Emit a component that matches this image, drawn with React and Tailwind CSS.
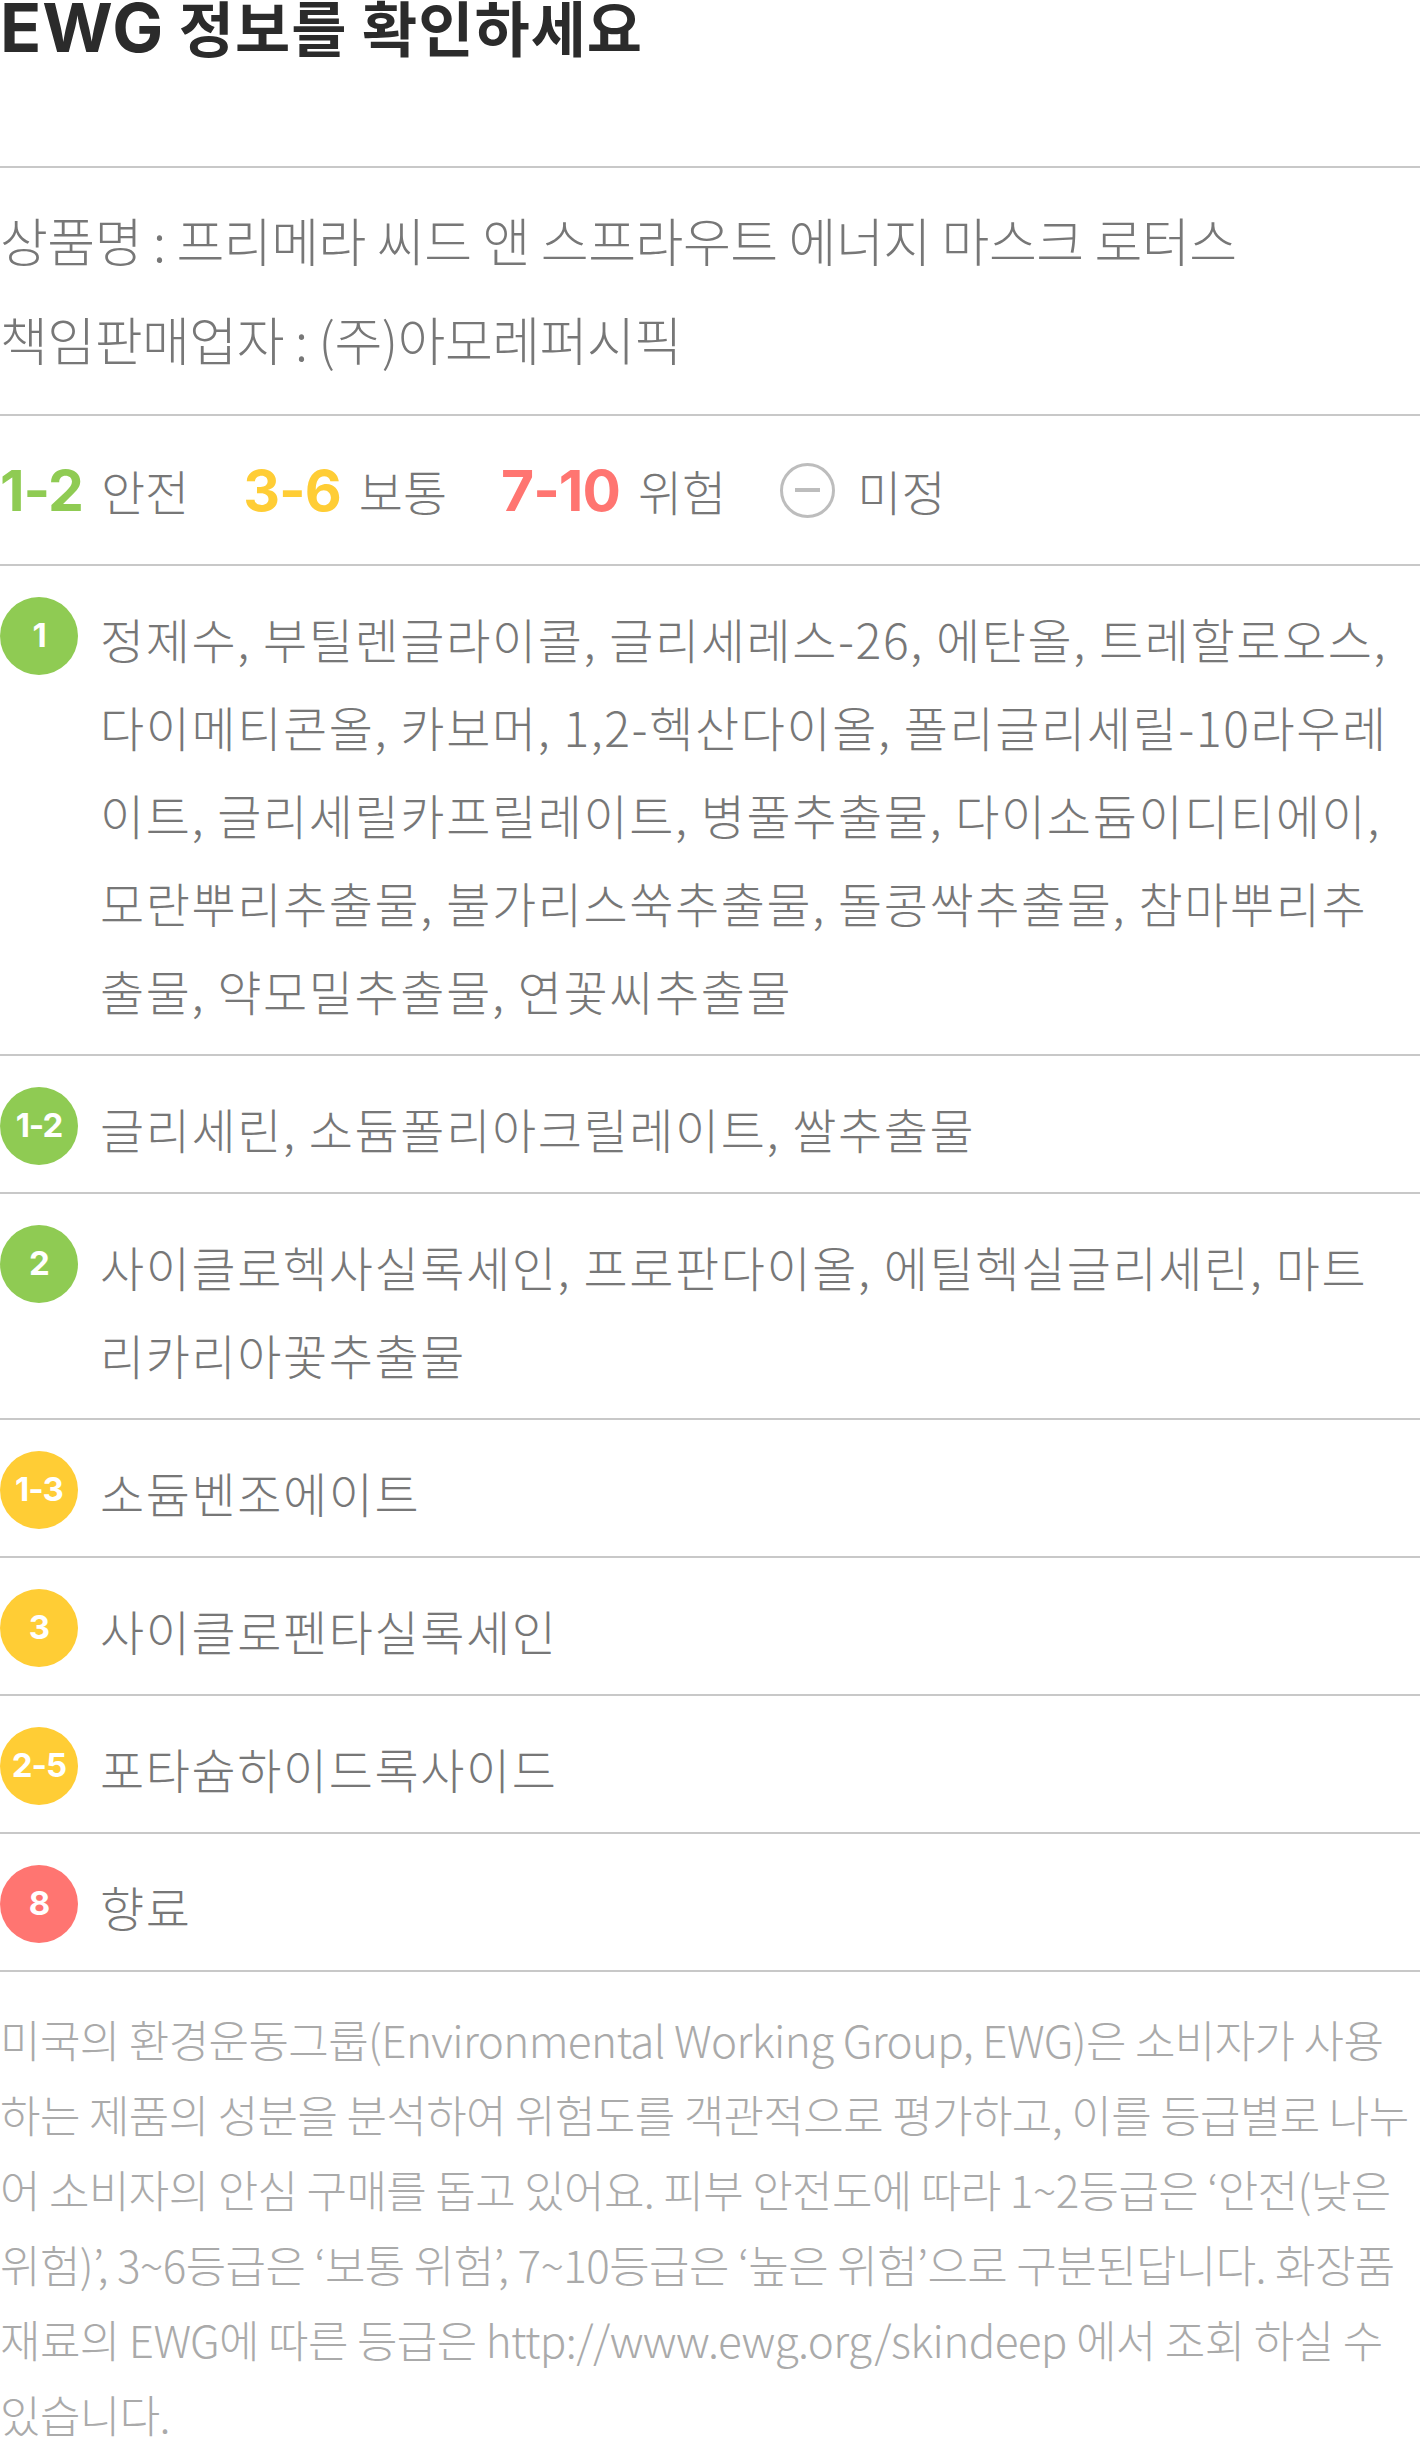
const rows = [
  {
    grade: "1",
    tone: "green",
    lines: [
      "정제수, 부틸렌글라이콜, 글리세레스-26, 에탄올, 트레할로오스,",
      "다이메티콘올, 카보머, 1,2-헥산다이올, 폴리글리세릴-10라우레",
      "이트, 글리세릴카프릴레이트, 병풀추출물, 다이소듐이디티에이,",
      "모란뿌리추출물, 불가리스쑥추출물, 돌콩싹추출물, 참마뿌리추",
      "출물, 약모밀추출물, 연꽃씨추출물",
    ],
  },
  { grade: "1-2", tone: "green", lines: ["글리세린, 소듐폴리아크릴레이트, 쌀추출물"] },
  {
    grade: "2",
    tone: "green",
    lines: ["사이클로헥사실록세인, 프로판다이올, 에틸헥실글리세린, 마트", "리카리아꽃추출물"],
  },
  { grade: "1-3", tone: "yellow", lines: ["소듐벤조에이트"] },
  { grade: "3", tone: "yellow", lines: ["사이클로펜타실록세인"] },
  { grade: "2-5", tone: "yellow", lines: ["포타슘하이드록사이드"] },
  { grade: "8", tone: "red", lines: ["향료"] },
];

const badgeTone = {
  green: "bg-[#8fcb53]",
  yellow: "bg-[#ffcd35]",
  red: "bg-[#ff7571]",
};

const footer = [
  "미국의 환경운동그룹(Environmental Working Group, EWG)은 소비자가 사용",
  "하는 제품의 성분을 분석하여 위험도를 객관적으로 평가하고, 이를 등급별로 나누",
  "어 소비자의 안심 구매를 돕고 있어요. 피부 안전도에 따라 1~2등급은 ‘안전(낮은",
  "위험)’, 3~6등급은 ‘보통 위험’, 7~10등급은 ‘높은 위험’으로 구분된답니다. 화장품",
  "재료의 EWG에 따른 등급은 http://www.ewg.org/skindeep 에서 조회 하실 수",
  "있습니다.",
];

function Badge({ grade, tone }) {
  return (
    <div
      className={`mt-[3px] flex h-[78px] w-[78px] shrink-0 items-center justify-center rounded-full ${badgeTone[tone]}`}
    >
      <span className="font-['Inter',sans-serif] text-[33px] font-bold tracking-[-1px] text-white">
        {grade}
      </span>
    </div>
  );
}

function LegendItem({ range, label, color }) {
  return (
    <div className="flex items-center gap-[18px]">
      <span className={`font-['Inter',sans-serif] text-[57px] font-bold leading-none tracking-[-1px] ${color}`}>
        {range}
      </span>
      <span className="text-[48px] font-light text-[#777]">{label}</span>
    </div>
  );
}

export default function App() {
  return (
    <div className="w-[1420px] bg-white font-['Noto_Sans_CJK_KR',sans-serif]">
      {/* Title */}
      <div className="h-[168px] border-b-2 border-[#c8c8c8]">
        <h2 className="text-[60px] font-bold leading-[52px] tracking-[1px] text-[#2b2b2b]">
          <span className="font-['Inter',sans-serif] text-[68px]">EWG</span> 정보를 확인하세요
        </h2>
      </div>

      {/* Product info */}
      <div className="border-b-2 border-[#c8c8c8] pt-[22px] pb-[26px] text-[52px] font-light leading-[99px] tracking-[-0.5px] text-[#777]">
        <p>상품명 : 프리메라 씨드 앤 스프라우트 에너지 마스크 로터스</p>
        <p>책임판매업자 : (주)아모레퍼시픽</p>
      </div>

      {/* Legend */}
      <div className="flex h-[150px] items-center gap-[54px] border-b-2 border-[#c8c8c8]">
        <LegendItem range="1-2" label="안전" color="text-[#8fcb53]" />
        <LegendItem range="3-6" label="보통" color="text-[#ffcd35]" />
        <LegendItem range="7-10" label="위험" color="text-[#ff7571]" />
        <div className="flex items-center gap-[22px]">
          <div className="flex h-[55px] w-[55px] items-center justify-center rounded-full border-[3px] border-[#bdbdbd]">
            <div className="h-[4px] w-[25px] bg-[#bdbdbd]"></div>
          </div>
          <span className="text-[48px] font-light text-[#777]">미정</span>
        </div>
      </div>

      {/* Ingredients */}
      {rows.map((row) => (
        <div
          key={row.grade}
          className="flex items-start gap-[22px] border-b-2 border-[#c8c8c8] pt-[28px] pb-[20px]"
        >
          <Badge grade={row.grade} tone={row.tone} />
          <div className="text-[48px] font-light leading-[88px] tracking-[1.6px] text-[#777]">
            {row.lines.map((line) => (
              <span key={line} className="block whitespace-nowrap">
                {line}
              </span>
            ))}
          </div>
        </div>
      ))}

      {/* Footer note */}
      <div className="pt-[30px] text-[44px] font-light leading-[75px] tracking-[-0.6px] text-[#aaa]">
        {footer.map((line) => (
          <span key={line} className="block whitespace-nowrap">
            {line}
          </span>
        ))}
      </div>
    </div>
  );
}
